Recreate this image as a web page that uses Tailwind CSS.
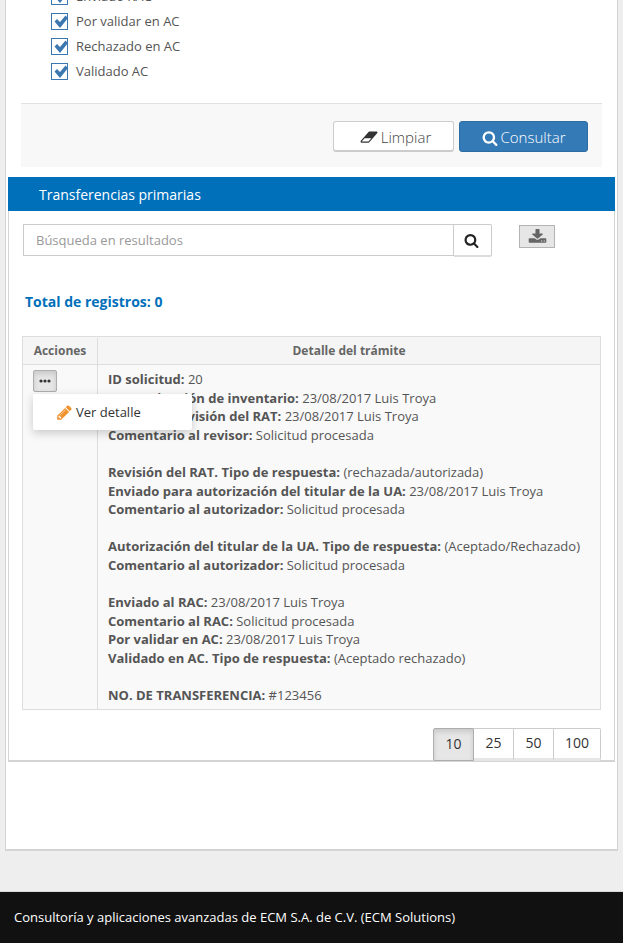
<!DOCTYPE html>
<html lang="es">
<head>
  <meta charset="UTF-8">
  <meta name="viewport" content="width=device-width, initial-scale=1.0">
  <title>Transferencias primarias</title>
  <script src="https://cdn.jsdelivr.net/npm/@tailwindcss/browser@4"></script>
</head>
<body class="h-[943px] overflow-hidden bg-[#eeeeee] font-['Open_Sans',sans-serif] text-[13px] leading-[18.57px] text-[#555555]">
  <div class="h-[892px] overflow-hidden border-b border-[#d9d9d9]">
    <!-- Main card -->
    <div class="ml-[5px] mt-[-29px] h-[880px] w-[613px] border-x border-b-2 border-[#d4d4d4] bg-white pl-[2px]">
      <!-- Checkboxes -->
      <div class="ml-[43px] h-[132px] pt-[12.5px] text-[13px] text-[#555555]">
        <label class="flex h-[25px] items-center gap-[8px]">
          <svg class="h-[17px] w-[17px]" viewBox="0 0 17 17"><rect x=".5" y=".5" width="16" height="16" fill="#fff" stroke="#3b78b0"/><path d="M3.500 8.500l2.500-2.500 3 3 5.500-6.500 2.500 2.500-8 10z" fill="#3b78b0"/></svg>
          <span>Enviado RAC</span>
        </label>
        <label class="flex h-[25px] items-center gap-[8px]">
          <svg class="h-[17px] w-[17px]" viewBox="0 0 17 17"><rect x=".5" y=".5" width="16" height="16" fill="#fff" stroke="#3b78b0"/><path d="M3.500 8.500l2.500-2.500 3 3 5.500-6.500 2.500 2.500-8 10z" fill="#3b78b0"/></svg>
          <span>Por validar en AC</span>
        </label>
        <label class="flex h-[25px] items-center gap-[8px]">
          <svg class="h-[17px] w-[17px]" viewBox="0 0 17 17"><rect x=".5" y=".5" width="16" height="16" fill="#fff" stroke="#3b78b0"/><path d="M3.500 8.500l2.500-2.500 3 3 5.500-6.500 2.500 2.500-8 10z" fill="#3b78b0"/></svg>
          <span>Rechazado en AC</span>
        </label>
        <label class="flex h-[25px] items-center gap-[8px]">
          <svg class="h-[17px] w-[17px]" viewBox="0 0 17 17"><rect x=".5" y=".5" width="16" height="16" fill="#fff" stroke="#3b78b0"/><path d="M3.500 8.500l2.500-2.500 3 3 5.500-6.500 2.500 2.500-8 10z" fill="#3b78b0"/></svg>
          <span>Validado AC</span>
        </label>
      </div>

      <!-- Form actions -->
      <div class="ml-[13px] flex h-[64px] w-[581px] items-start justify-end gap-[5px] border-t border-[#e1e1e1] bg-[#f8f8f8] pr-[14px] pt-[17px]">
        <button class="flex h-[31px] w-[121px] items-center justify-center gap-[3px] rounded-[3px] border border-[#cccccc] border-b-[2px] bg-white pl-[4px] pt-[2px] text-[15px] font-light text-[#444444]">
          <svg class="h-[16px] w-[18px]" viewBox="0 0 2048 1792"><path fill="#333" d="M960 1408l336-384h-768l-336 384h768zm1013-1077q15 34 9.500 71.500t-30.500 65.500l-896 1024q-38 44-96 44h-768q-38 0-69.500-20.500t-47.500-54.500q-15-34-9.500-71.500t30.500-65.500l896-1024q38-44 96-44h768q38 0 69.500 20.500t47.500 54.500z"/></svg>
          Limpiar
        </button>
        <button class="flex h-[31px] w-[129px] items-center justify-center gap-[3px] rounded-[3px] border border-[#2e6da4] bg-[#337ab7] pt-[2px] text-[15px] font-light text-white">
          <svg class="h-[16px] w-[16px]" viewBox="0 0 1792 1792"><path fill="#fff" d="M1216 832q0-185-131.500-316.500t-316.500-131.500-316.500 131.500-131.500 316.500 131.500 316.500 316.500 131.500 316.500-131.500 131.500-316.500zm512 832q0 52-38 90t-90 38q-54 0-90-38l-343-342q-179 124-399 124-143 0-273.500-55.500t-225-150-150-225-55.500-273.500 55.500-273.500 150-225 225-150 273.500-55.500 273.500 55.500 225 150 150 225 55.500 273.500q0 220-124 399l343 343q37 37 37 90z"/></svg>
          Consultar
        </button>
      </div>

      <!-- Results panel -->
      <div class="mt-[10px] h-[585px] w-[607px] border-x border-b-2 border-[#d4d4d4]">
        <h2 class="-mx-px flex h-[34px] items-center bg-[#0070ba] pl-[31px] pt-[2px] text-[14px] font-normal text-white">Transferencias primarias</h2>

        <!-- Search -->
        <div class="mt-[13px] flex items-start pl-[14px]">
          <div class="flex h-[32px] w-[431px] items-center border border-[#cccccc] pl-[12px] text-[13px] text-[#999999]">Búsqueda en resultados</div>
          <button class="flex h-[33px] w-[38px] items-center justify-center rounded-r-[2px] border border-l-0 border-[#cccccc] border-b-[2px] border-b-[#dddddd] bg-white pr-[2px]">
            <svg class="h-[15px] w-[15px]" viewBox="0 0 1792 1792"><path fill="#222" d="M1216 832q0-185-131.500-316.500t-316.500-131.500-316.500 131.500-131.500 316.500 131.500 316.500 316.500 131.500 316.500-131.500 131.500-316.500zm512 832q0 52-38 90t-90 38q-54 0-90-38l-343-342q-179 124-399 124-143 0-273.500-55.500t-225-150-150-225-55.500-273.500 55.500-273.500 150-225 225-150 273.500-55.500 273.500 55.500 225 150 150 225 55.500 273.500q0 220-124 399l343 343q37 37 37 90z"/></svg>
          </button>
          <button class="ml-[27px] mt-px flex h-[23px] w-[36px] items-center justify-center border border-[#b3b3b3] bg-[#e6e6e6]">
            <svg class="h-[16px] w-[19px]" viewBox="0 0 1792 1792" preserveAspectRatio="none"><path fill="#666" d="M1344 1344q0-26-19-45t-45-19-45 19-19 45 19 45 45 19 45-19 19-45zm256 0q0-26-19-45t-45-19-45 19-19 45 19 45 45 19 45-19 19-45zm128-224v320q0 40-28 68t-68 28h-1472q-40 0-68-28t-28-68v-320q0-40 28-68t68-28h465l135 136q58 56 136 56t136-56l136-136h464q40 0 68 28t28 68zm-325-569q17 41-14 70l-448 448q-18 19-45 19t-45-19l-448-448q-31-29-14-70 17-39 59-39h256v-448q0-26 19-45t45-19h256q26 0 45 19t19 45v448h256q42 0 59 39z"/></svg>
          </button>
        </div>

        <p class="ml-[16px] mt-[35px] text-[14px] font-bold leading-[20px] text-[#0070ba]">Total de registros: 0</p>

        <!-- Table -->
        <div class="relative ml-[13px] mt-[24px] w-[579px] border border-[#dddddd] bg-[#f9f9f9]">
          <div class="flex h-[28px] border-b border-[#dddddd] bg-[#f5f5f5] pt-px text-[12px] font-bold text-[#666666]">
            <div class="flex w-[75px] items-center justify-center border-r border-[#dddddd]">Acciones</div>
            <div class="flex flex-1 items-center justify-center">Detalle del trámite</div>
          </div>
          <div class="flex h-[344px]">
            <div class="w-[75px] border-r border-[#dddddd] pl-[10px] pt-[5px]">
              <button class="flex h-[22px] w-[24px] items-center justify-center rounded-[2px] border border-[#adadad] bg-[#e6e6e6] shadow-[inset_0_3px_5px_rgba(0,0,0,0.125)]">
                <svg class="h-[4px] w-[12px]" viewBox="0 0 12 4"><circle cx="2" cy="2" r="1.600" fill="#333"/><circle cx="6" cy="2" r="1.600" fill="#333"/><circle cx="10" cy="2" r="1.600" fill="#333"/></svg>
              </button>
            </div>
            <div class="flex-1 pl-[10px] pt-[5.2px] text-[#555555]">
              <p><b>ID solicitud:</b> 20</p>
              <p><b>Determinación de inventario:</b> 23/08/2017 Luis Troya</p>
              <p><b>Enviado a revisión del RAT:</b> 23/08/2017 Luis Troya</p>
              <p><b>Comentario al revisor:</b> Solicitud procesada</p>
              <p class="mt-[18.57px]"><b>Revisión del RAT. Tipo de respuesta:</b> (rechazada/autorizada)</p>
              <p><b>Enviado para autorización del titular de la UA:</b> 23/08/2017 Luis Troya</p>
              <p><b>Comentario al autorizador:</b> Solicitud procesada</p>
              <p class="mt-[18.57px]"><b>Autorización del titular de la UA. Tipo de respuesta:</b> (Aceptado/Rechazado)</p>
              <p><b>Comentario al autorizador:</b> Solicitud procesada</p>
              <p class="mt-[18.57px]"><b>Enviado al RAC:</b> 23/08/2017 Luis Troya</p>
              <p><b>Comentario al RAC:</b> Solicitud procesada</p>
              <p><b>Por validar en AC:</b> 23/08/2017 Luis Troya</p>
              <p><b>Validado en AC. Tipo de respuesta:</b> (Aceptado rechazado)</p>
              <p class="mt-[18.57px]"><b>NO. DE TRANSFERENCIA:</b> #123456</p>
            </div>
          </div>

          <!-- Row action menu -->
          <div class="absolute left-[10px] top-[57px] flex h-[36px] w-[159px] items-center gap-[3px] rounded-[2px] bg-white pl-[23px] text-[#333333] shadow-[0_3px_10px_rgba(0,0,0,0.2)]">
            <svg class="h-[17px] w-[17px]" viewBox="0 0 1792 1792"><path fill="#f0932f" d="M491 1536l91-91-235-235-91 91v107h128v128h107zm523-928q0-22-22-22-10 0-17 7l-542 542q-7 7-7 17 0 22 22 22 10 0 17-7l542-542q7-7 7-17zm-54-192l416 416-832 832h-416v-416zm683 96q0 53-37 90l-166 166-416-416 166-165q36-38 90-38 53 0 91 38l235 234q37 39 37 91z"/></svg>
            Ver detalle
          </div>
        </div>

        <!-- Page size -->
        <div class="mr-[13px] mt-[18px] flex justify-end text-[14px] text-[#333333]">
          <button class="h-[33px] w-[41px] rounded-l-[2px] border border-[#adadad] bg-[#e6e6e6] shadow-[inset_0_3px_5px_rgba(0,0,0,0.125)]">10</button>
          <button class="h-[33px] w-[40px] border-y border-r border-[#cccccc] border-b-[3px] border-b-[#e6e6e6] bg-white">25</button>
          <button class="h-[33px] w-[40px] border-y border-r border-[#cccccc] border-b-[3px] border-b-[#e6e6e6] bg-white">50</button>
          <button class="h-[33px] w-[47px] rounded-r-[2px] border-y border-r border-[#cccccc] border-b-[3px] border-b-[#e6e6e6] bg-white">100</button>
        </div>
      </div>
    </div>
  </div>

  <!-- Footer -->
  <footer class="flex h-[51px] items-center bg-[#111111] pl-[14px] text-[13px] text-white">Consultoría y aplicaciones avanzadas de ECM S.A. de C.V. (ECM Solutions)</footer>
</body>
</html>
